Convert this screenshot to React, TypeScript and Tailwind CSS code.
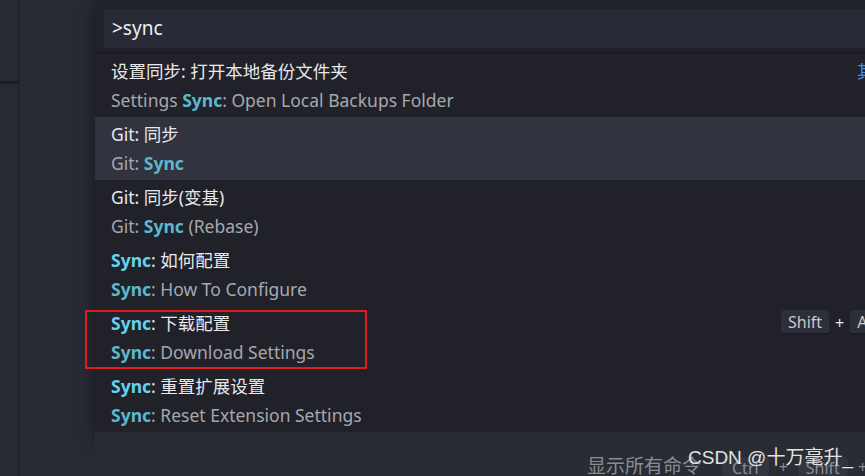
import React from 'react';

type Part = { t: string; hl?: boolean };
type Item = { title: Part[]; desc: Part[]; selected?: boolean; boxed?: boolean; keys?: string[]; extra?: string };

const S: Part = { t: 'Sync', hl: true };

const items: Item[] = [
  { title: [{ t: '设置同步: 打开本地备份文件夹' }], desc: [{ t: 'Settings ' }, S, { t: ': Open Local Backups Folder' }], extra: '其' },
  { title: [{ t: 'Git: 同步' }], desc: [{ t: 'Git: ' }, S], selected: true },
  { title: [{ t: 'Git: 同步(变基)' }], desc: [{ t: 'Git: ' }, S, { t: ' (Rebase)' }] },
  { title: [S, { t: ': 如何配置' }], desc: [S, { t: ': How To Configure' }] },
  { title: [S, { t: ': 下载配置' }], desc: [S, { t: ': Download Settings' }], boxed: true, keys: ['Shift', 'A'] },
  { title: [S, { t: ': 重置扩展设置' }], desc: [S, { t: ': Reset Extension Settings' }] },
];

const font = { fontFamily: '"Noto Sans", "Noto Sans CJK SC", sans-serif' };

const Line = ({ parts, sub }: { parts: Part[]; sub?: boolean }) => (
  <div className={`h-[29px] flex items-center whitespace-pre ${sub ? 'text-[#a6a8ae]' : 'text-[#e8e8ea]'}`}>
    {parts.map((p, i) =>
      p.hl ? (
        <span key={i} className={`font-bold ${sub ? 'text-[#5bb8cd]' : 'text-[#63d3ef]'}`}>{p.t}</span>
      ) : (
        <span key={i}>{p.t}</span>
      )
    )}
  </div>
);

const Key = ({ k }: { k: string }) => (
  <span className="h-[25px] px-[7px] flex items-center rounded-[4px] bg-[#2c2e38] border-b-2 border-[#1a1b22] text-[16px] text-[#c8c9cc]">{k}</span>
);

export default function App() {
  return (
    <div className="w-[865px] h-[476px] overflow-hidden bg-[#272a33] relative text-[17.5px]" style={font}>
      <div className="flex h-full">
        {/* left strip */}
        <div className="w-[19px] shrink-0 border-r border-[#1d2027] flex flex-col">
          <div className="h-[81px]" />
          <div className="h-[3px] bg-[#1c1e24]" />
        </div>
        <div className="flex-1 flex flex-col">
          {/* palette */}
          <div className="ml-[76px] h-[436px] bg-[#202129] shadow-[0_6px_14px_rgba(0,0,0,0.45)] flex flex-col">
            <div className="pt-[9px] pb-[3px] pl-[9px]">
              <div className="h-[39px] bg-[#282a36] flex items-center pl-[8px] text-[19px] text-[#eeeeee]">&gt;sync</div>
            </div>
            <div className="h-[3px] bg-[#1a1b21]" />
            <div className="flex flex-col">
              {items.map((it, i) => (
                <div key={i} className={`h-[63px] relative flex items-center pl-[16px] ${it.selected ? 'bg-[#31333f]' : ''}`}>
                  <div className="flex flex-col">
                    <Line parts={it.title} />
                    <Line parts={it.desc} sub />
                  </div>
                  {it.boxed && (
                    <div className="absolute left-[-10px] top-[4px] w-[282px] h-[59px] border-2 border-[#e11b1b]" />
                  )}
                  {it.keys && (
                    <div className="absolute left-[686px] top-[4px] flex items-center gap-[6px]">
                      <Key k={it.keys[0]} />
                      <span className="text-[#e8e8e8] text-[16px]">+</span>
                      <Key k={it.keys[1]} />
                    </div>
                  )}
                  {it.extra && (
                    <span className="absolute left-[762px] top-[4px] text-[#3d8fe8]">{it.extra}</span>
                  )}
                </div>
              ))}
            </div>
          </div>
          {/* bottom strip */}
          <div className="ml-[76px] flex-1 bg-[#2a2c34] flex items-start pt-[25px] pl-[492px] text-[19px] text-[#8a8c93]">
            <span className="leading-none w-[135px] shrink-0">显示所有命令</span>
            <div className="flex items-center gap-[10px] text-[16px] leading-none">
              <span className="px-[10px] pt-[3px] h-[20px] rounded bg-[#33353e]">Ctrl</span>
              <span>+</span>
              <span className="px-[8px] pt-[3px] h-[20px] rounded bg-[#33353e]">Shift</span>
              <span>+</span>
              <span className="px-[8px] pt-[3px] h-[20px] rounded bg-[#33353e]">P</span>
            </div>
          </div>
        </div>
      </div>
      <div
        className="absolute left-[688px] top-[444px] text-[19px] text-[#e2e2e2]"
        style={{ fontFamily: '"Liberation Sans", "Noto Sans CJK SC", sans-serif' }}
      >
        CSDN @十万毫升_
      </div>
    </div>
  );
}
